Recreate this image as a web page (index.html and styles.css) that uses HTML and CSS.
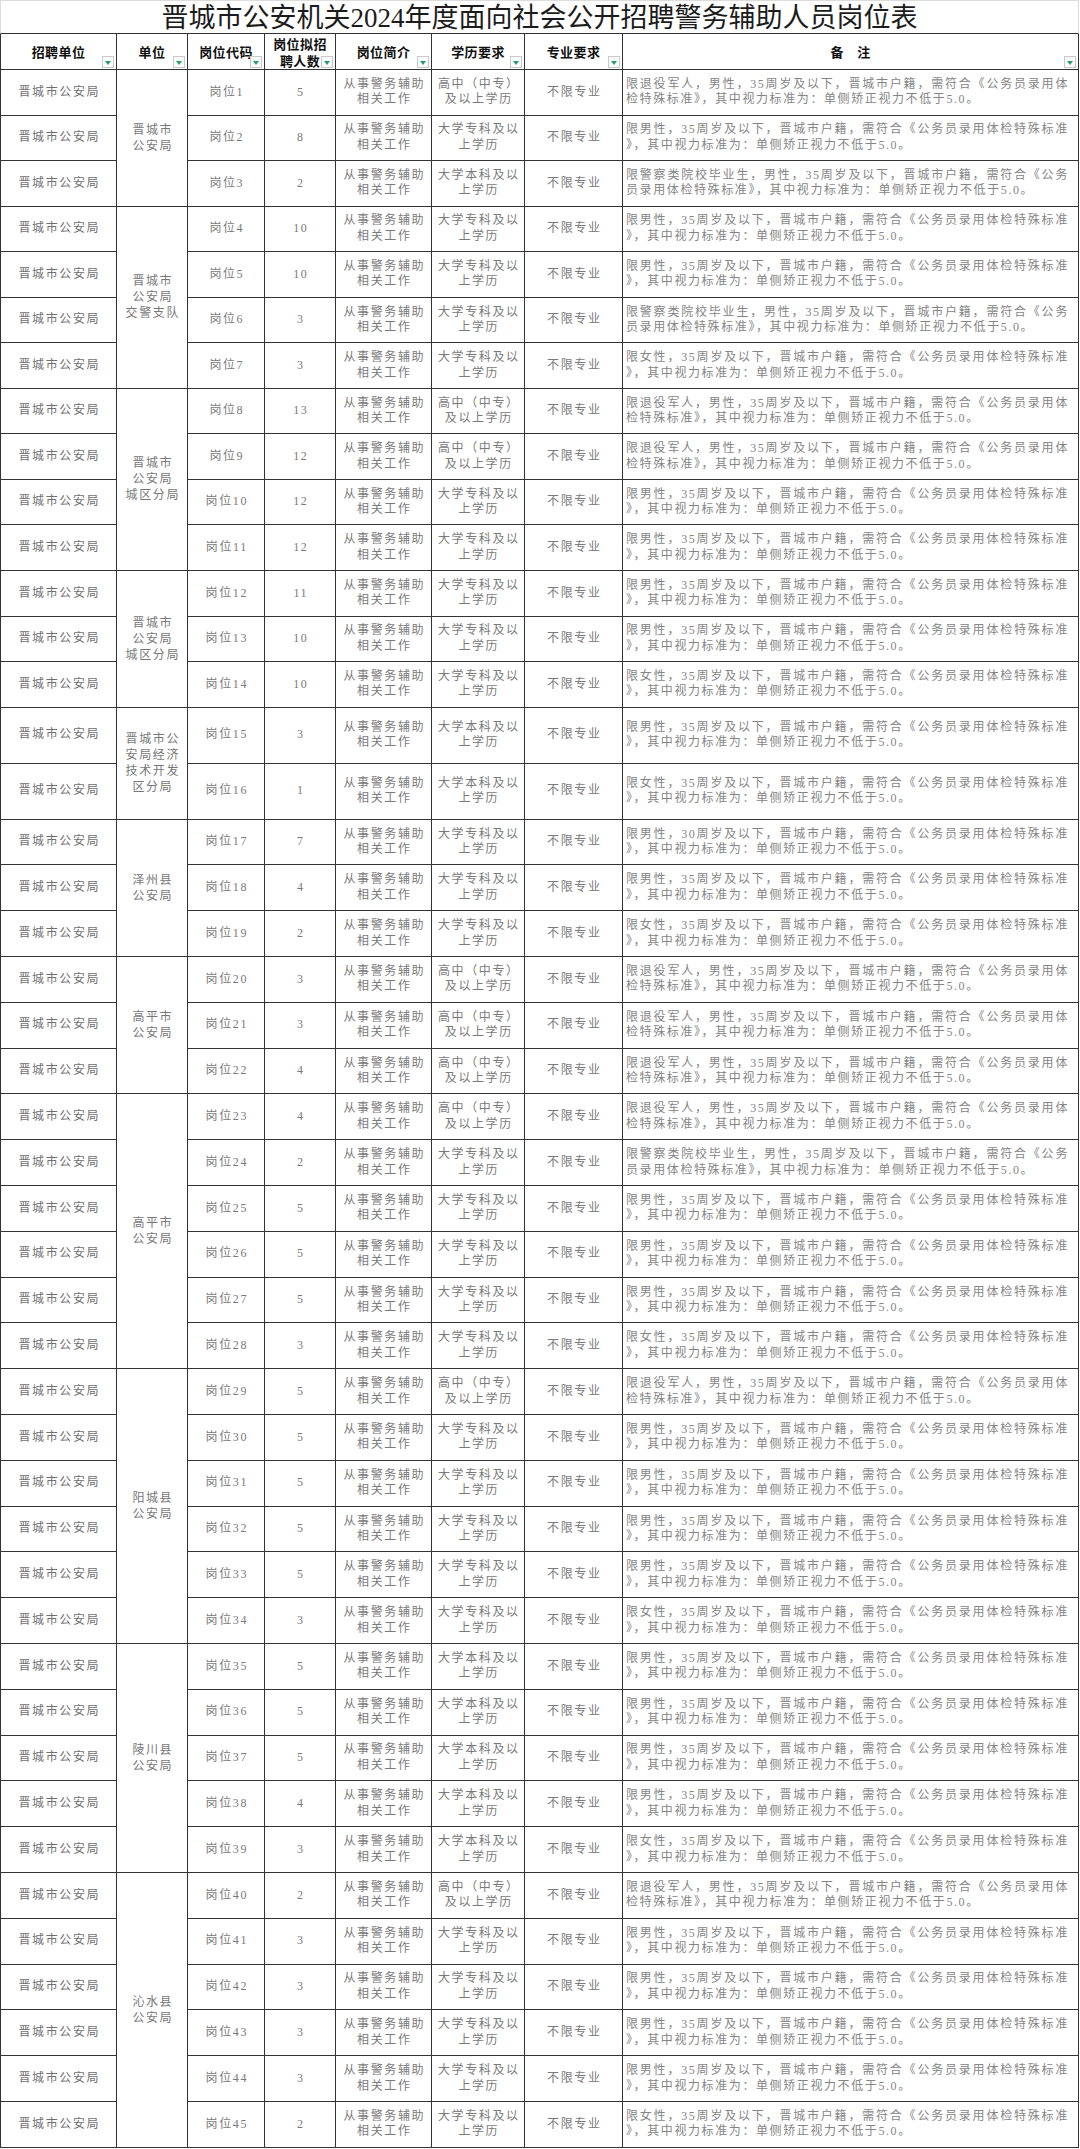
FILE: index.html
```html
<!DOCTYPE html>
<html lang="zh-CN">
<head>
<meta charset="utf-8">
<title>晋城市公安机关2024年度面向社会公开招聘警务辅助人员岗位表</title>
<link rel="stylesheet" href="styles.css">
</head>
<body>
<div class="sheet">
  <div class="title">晋城市公安机关2024年度面向社会公开招聘警务辅助人员岗位表</div>

  <div class="cell hd first">招聘单位<span class="flt"></span></div>
  <div class="cell hd">单位<span class="flt"></span></div>
  <div class="cell hd">岗位代码<span class="flt"></span></div>
  <div class="cell hd two">岗位拟招<br>聘人数<span class="flt"></span></div>
  <div class="cell hd">岗位简介<span class="flt"></span></div>
  <div class="cell hd">学历要求<span class="flt"></span></div>
  <div class="cell hd">专业要求<span class="flt"></span></div>
  <div class="cell hd wide">备　注<span class="flt"></span></div>

  <!-- 1 -->
  <div class="cell first org">晋城市公安局</div>
  <div class="cell unit span3">晋城市<br>公安局</div>
  <div class="cell">岗位1</div><div class="cell">5</div>
  <div class="cell">从事警务辅助<br>相关工作</div><div class="cell">高中（中专）<br>及以上学历</div>
  <div class="cell">不限专业</div>
  <div class="cell rm"><div class="rmw"><span class="l1">限退役军人，男性，35周岁及以下，晋城市户籍，需符合《公务员录用体</span><span class="l2">检特殊标准》，其中视力标准为：单侧矫正视力不低于5.0。</span></div></div>
  <!-- 2 -->
  <div class="cell first org">晋城市公安局</div>
  <div class="cell">岗位2</div><div class="cell">8</div>
  <div class="cell">从事警务辅助<br>相关工作</div><div class="cell">大学专科及以<br>上学历</div>
  <div class="cell">不限专业</div>
  <div class="cell rm"><div class="rmw"><span class="l1">限男性，35周岁及以下，晋城市户籍，需符合《公务员录用体检特殊标准</span><span class="l2">》，其中视力标准为：单侧矫正视力不低于5.0。</span></div></div>
  <!-- 3 -->
  <div class="cell first org">晋城市公安局</div>
  <div class="cell">岗位3</div><div class="cell">2</div>
  <div class="cell">从事警务辅助<br>相关工作</div><div class="cell">大学本科及以<br>上学历</div>
  <div class="cell">不限专业</div>
  <div class="cell rm"><div class="rmw"><span class="l1">限警察类院校毕业生，男性，35周岁及以下，晋城市户籍，需符合《公务</span><span class="l2">员录用体检特殊标准》，其中视力标准为：单侧矫正视力不低于5.0。</span></div></div>

  <!-- 4 -->
  <div class="cell first org">晋城市公安局</div>
  <div class="cell unit span4">晋城市<br>公安局<br>交警支队</div>
  <div class="cell">岗位4</div><div class="cell">10</div>
  <div class="cell">从事警务辅助<br>相关工作</div><div class="cell">大学专科及以<br>上学历</div>
  <div class="cell">不限专业</div>
  <div class="cell rm"><div class="rmw"><span class="l1">限男性，35周岁及以下，晋城市户籍，需符合《公务员录用体检特殊标准</span><span class="l2">》，其中视力标准为：单侧矫正视力不低于5.0。</span></div></div>
  <!-- 5 -->
  <div class="cell first org">晋城市公安局</div>
  <div class="cell">岗位5</div><div class="cell">10</div>
  <div class="cell">从事警务辅助<br>相关工作</div><div class="cell">大学专科及以<br>上学历</div>
  <div class="cell">不限专业</div>
  <div class="cell rm"><div class="rmw"><span class="l1">限男性，35周岁及以下，晋城市户籍，需符合《公务员录用体检特殊标准</span><span class="l2">》，其中视力标准为：单侧矫正视力不低于5.0。</span></div></div>
  <!-- 6 -->
  <div class="cell first org">晋城市公安局</div>
  <div class="cell">岗位6</div><div class="cell">3</div>
  <div class="cell">从事警务辅助<br>相关工作</div><div class="cell">大学专科及以<br>上学历</div>
  <div class="cell">不限专业</div>
  <div class="cell rm"><div class="rmw"><span class="l1">限警察类院校毕业生，男性，35周岁及以下，晋城市户籍，需符合《公务</span><span class="l2">员录用体检特殊标准》，其中视力标准为：单侧矫正视力不低于5.0。</span></div></div>
  <!-- 7 -->
  <div class="cell first org">晋城市公安局</div>
  <div class="cell">岗位7</div><div class="cell">3</div>
  <div class="cell">从事警务辅助<br>相关工作</div><div class="cell">大学专科及以<br>上学历</div>
  <div class="cell">不限专业</div>
  <div class="cell rm"><div class="rmw"><span class="l1">限女性，35周岁及以下，晋城市户籍，需符合《公务员录用体检特殊标准</span><span class="l2">》，其中视力标准为：单侧矫正视力不低于5.0。</span></div></div>

  <!-- 8 -->
  <div class="cell first org">晋城市公安局</div>
  <div class="cell unit span4">晋城市<br>公安局<br>城区分局</div>
  <div class="cell">岗位8</div><div class="cell">13</div>
  <div class="cell">从事警务辅助<br>相关工作</div><div class="cell">高中（中专）<br>及以上学历</div>
  <div class="cell">不限专业</div>
  <div class="cell rm"><div class="rmw"><span class="l1">限退役军人，男性，35周岁及以下，晋城市户籍，需符合《公务员录用体</span><span class="l2">检特殊标准》，其中视力标准为：单侧矫正视力不低于5.0。</span></div></div>
  <!-- 9 -->
  <div class="cell first org">晋城市公安局</div>
  <div class="cell">岗位9</div><div class="cell">12</div>
  <div class="cell">从事警务辅助<br>相关工作</div><div class="cell">高中（中专）<br>及以上学历</div>
  <div class="cell">不限专业</div>
  <div class="cell rm"><div class="rmw"><span class="l1">限退役军人，男性，35周岁及以下，晋城市户籍，需符合《公务员录用体</span><span class="l2">检特殊标准》，其中视力标准为：单侧矫正视力不低于5.0。</span></div></div>
  <!-- 10 -->
  <div class="cell first org">晋城市公安局</div>
  <div class="cell">岗位10</div><div class="cell">12</div>
  <div class="cell">从事警务辅助<br>相关工作</div><div class="cell">大学专科及以<br>上学历</div>
  <div class="cell">不限专业</div>
  <div class="cell rm"><div class="rmw"><span class="l1">限男性，35周岁及以下，晋城市户籍，需符合《公务员录用体检特殊标准</span><span class="l2">》，其中视力标准为：单侧矫正视力不低于5.0。</span></div></div>
  <!-- 11 -->
  <div class="cell first org">晋城市公安局</div>
  <div class="cell">岗位11</div><div class="cell">12</div>
  <div class="cell">从事警务辅助<br>相关工作</div><div class="cell">大学专科及以<br>上学历</div>
  <div class="cell">不限专业</div>
  <div class="cell rm"><div class="rmw"><span class="l1">限男性，35周岁及以下，晋城市户籍，需符合《公务员录用体检特殊标准</span><span class="l2">》，其中视力标准为：单侧矫正视力不低于5.0。</span></div></div>

  <!-- 12 -->
  <div class="cell first org">晋城市公安局</div>
  <div class="cell unit span3">晋城市<br>公安局<br>城区分局</div>
  <div class="cell">岗位12</div><div class="cell">11</div>
  <div class="cell">从事警务辅助<br>相关工作</div><div class="cell">大学专科及以<br>上学历</div>
  <div class="cell">不限专业</div>
  <div class="cell rm"><div class="rmw"><span class="l1">限男性，35周岁及以下，晋城市户籍，需符合《公务员录用体检特殊标准</span><span class="l2">》，其中视力标准为：单侧矫正视力不低于5.0。</span></div></div>
  <!-- 13 -->
  <div class="cell first org">晋城市公安局</div>
  <div class="cell">岗位13</div><div class="cell">10</div>
  <div class="cell">从事警务辅助<br>相关工作</div><div class="cell">大学专科及以<br>上学历</div>
  <div class="cell">不限专业</div>
  <div class="cell rm"><div class="rmw"><span class="l1">限男性，35周岁及以下，晋城市户籍，需符合《公务员录用体检特殊标准</span><span class="l2">》，其中视力标准为：单侧矫正视力不低于5.0。</span></div></div>
  <!-- 14 -->
  <div class="cell first org">晋城市公安局</div>
  <div class="cell">岗位14</div><div class="cell">10</div>
  <div class="cell">从事警务辅助<br>相关工作</div><div class="cell">大学专科及以<br>上学历</div>
  <div class="cell">不限专业</div>
  <div class="cell rm"><div class="rmw"><span class="l1">限女性，35周岁及以下，晋城市户籍，需符合《公务员录用体检特殊标准</span><span class="l2">》，其中视力标准为：单侧矫正视力不低于5.0。</span></div></div>

  <!-- 15 -->
  <div class="cell first org">晋城市公安局</div>
  <div class="cell unit span2">晋城市公<br>安局经济<br>技术开发<br>区分局</div>
  <div class="cell">岗位15</div><div class="cell">3</div>
  <div class="cell">从事警务辅助<br>相关工作</div><div class="cell">大学本科及以<br>上学历</div>
  <div class="cell">不限专业</div>
  <div class="cell rm"><div class="rmw"><span class="l1">限男性，35周岁及以下，晋城市户籍，需符合《公务员录用体检特殊标准</span><span class="l2">》，其中视力标准为：单侧矫正视力不低于5.0。</span></div></div>
  <!-- 16 -->
  <div class="cell first org">晋城市公安局</div>
  <div class="cell">岗位16</div><div class="cell">1</div>
  <div class="cell">从事警务辅助<br>相关工作</div><div class="cell">大学本科及以<br>上学历</div>
  <div class="cell">不限专业</div>
  <div class="cell rm"><div class="rmw"><span class="l1">限女性，35周岁及以下，晋城市户籍，需符合《公务员录用体检特殊标准</span><span class="l2">》，其中视力标准为：单侧矫正视力不低于5.0。</span></div></div>

  <!-- 17 -->
  <div class="cell first org">晋城市公安局</div>
  <div class="cell unit span3">泽州县<br>公安局</div>
  <div class="cell">岗位17</div><div class="cell">7</div>
  <div class="cell">从事警务辅助<br>相关工作</div><div class="cell">大学专科及以<br>上学历</div>
  <div class="cell">不限专业</div>
  <div class="cell rm"><div class="rmw"><span class="l1">限男性，30周岁及以下，晋城市户籍，需符合《公务员录用体检特殊标准</span><span class="l2">》，其中视力标准为：单侧矫正视力不低于5.0。</span></div></div>
  <!-- 18 -->
  <div class="cell first org">晋城市公安局</div>
  <div class="cell">岗位18</div><div class="cell">4</div>
  <div class="cell">从事警务辅助<br>相关工作</div><div class="cell">大学专科及以<br>上学历</div>
  <div class="cell">不限专业</div>
  <div class="cell rm"><div class="rmw"><span class="l1">限男性，35周岁及以下，晋城市户籍，需符合《公务员录用体检特殊标准</span><span class="l2">》，其中视力标准为：单侧矫正视力不低于5.0。</span></div></div>
  <!-- 19 -->
  <div class="cell first org">晋城市公安局</div>
  <div class="cell">岗位19</div><div class="cell">2</div>
  <div class="cell">从事警务辅助<br>相关工作</div><div class="cell">大学专科及以<br>上学历</div>
  <div class="cell">不限专业</div>
  <div class="cell rm"><div class="rmw"><span class="l1">限女性，35周岁及以下，晋城市户籍，需符合《公务员录用体检特殊标准</span><span class="l2">》，其中视力标准为：单侧矫正视力不低于5.0。</span></div></div>

  <!-- 20 -->
  <div class="cell first org">晋城市公安局</div>
  <div class="cell unit span3">高平市<br>公安局</div>
  <div class="cell">岗位20</div><div class="cell">3</div>
  <div class="cell">从事警务辅助<br>相关工作</div><div class="cell">高中（中专）<br>及以上学历</div>
  <div class="cell">不限专业</div>
  <div class="cell rm"><div class="rmw"><span class="l1">限退役军人，男性，35周岁及以下，晋城市户籍，需符合《公务员录用体</span><span class="l2">检特殊标准》，其中视力标准为：单侧矫正视力不低于5.0。</span></div></div>
  <!-- 21 -->
  <div class="cell first org">晋城市公安局</div>
  <div class="cell">岗位21</div><div class="cell">3</div>
  <div class="cell">从事警务辅助<br>相关工作</div><div class="cell">高中（中专）<br>及以上学历</div>
  <div class="cell">不限专业</div>
  <div class="cell rm"><div class="rmw"><span class="l1">限退役军人，男性，35周岁及以下，晋城市户籍，需符合《公务员录用体</span><span class="l2">检特殊标准》，其中视力标准为：单侧矫正视力不低于5.0。</span></div></div>
  <!-- 22 -->
  <div class="cell first org">晋城市公安局</div>
  <div class="cell">岗位22</div><div class="cell">4</div>
  <div class="cell">从事警务辅助<br>相关工作</div><div class="cell">高中（中专）<br>及以上学历</div>
  <div class="cell">不限专业</div>
  <div class="cell rm"><div class="rmw"><span class="l1">限退役军人，男性，35周岁及以下，晋城市户籍，需符合《公务员录用体</span><span class="l2">检特殊标准》，其中视力标准为：单侧矫正视力不低于5.0。</span></div></div>

  <!-- 23 -->
  <div class="cell first org">晋城市公安局</div>
  <div class="cell unit span6">高平市<br>公安局</div>
  <div class="cell">岗位23</div><div class="cell">4</div>
  <div class="cell">从事警务辅助<br>相关工作</div><div class="cell">高中（中专）<br>及以上学历</div>
  <div class="cell">不限专业</div>
  <div class="cell rm"><div class="rmw"><span class="l1">限退役军人，男性，35周岁及以下，晋城市户籍，需符合《公务员录用体</span><span class="l2">检特殊标准》，其中视力标准为：单侧矫正视力不低于5.0。</span></div></div>
  <!-- 24 -->
  <div class="cell first org">晋城市公安局</div>
  <div class="cell">岗位24</div><div class="cell">2</div>
  <div class="cell">从事警务辅助<br>相关工作</div><div class="cell">大学专科及以<br>上学历</div>
  <div class="cell">不限专业</div>
  <div class="cell rm"><div class="rmw"><span class="l1">限警察类院校毕业生，男性，35周岁及以下，晋城市户籍，需符合《公务</span><span class="l2">员录用体检特殊标准》，其中视力标准为：单侧矫正视力不低于5.0。</span></div></div>
  <!-- 25 -->
  <div class="cell first org">晋城市公安局</div>
  <div class="cell">岗位25</div><div class="cell">5</div>
  <div class="cell">从事警务辅助<br>相关工作</div><div class="cell">大学专科及以<br>上学历</div>
  <div class="cell">不限专业</div>
  <div class="cell rm"><div class="rmw"><span class="l1">限男性，35周岁及以下，晋城市户籍，需符合《公务员录用体检特殊标准</span><span class="l2">》，其中视力标准为：单侧矫正视力不低于5.0。</span></div></div>
  <!-- 26 -->
  <div class="cell first org">晋城市公安局</div>
  <div class="cell">岗位26</div><div class="cell">5</div>
  <div class="cell">从事警务辅助<br>相关工作</div><div class="cell">大学专科及以<br>上学历</div>
  <div class="cell">不限专业</div>
  <div class="cell rm"><div class="rmw"><span class="l1">限男性，35周岁及以下，晋城市户籍，需符合《公务员录用体检特殊标准</span><span class="l2">》，其中视力标准为：单侧矫正视力不低于5.0。</span></div></div>
  <!-- 27 -->
  <div class="cell first org">晋城市公安局</div>
  <div class="cell">岗位27</div><div class="cell">5</div>
  <div class="cell">从事警务辅助<br>相关工作</div><div class="cell">大学专科及以<br>上学历</div>
  <div class="cell">不限专业</div>
  <div class="cell rm"><div class="rmw"><span class="l1">限男性，35周岁及以下，晋城市户籍，需符合《公务员录用体检特殊标准</span><span class="l2">》，其中视力标准为：单侧矫正视力不低于5.0。</span></div></div>
  <!-- 28 -->
  <div class="cell first org">晋城市公安局</div>
  <div class="cell">岗位28</div><div class="cell">3</div>
  <div class="cell">从事警务辅助<br>相关工作</div><div class="cell">大学专科及以<br>上学历</div>
  <div class="cell">不限专业</div>
  <div class="cell rm"><div class="rmw"><span class="l1">限女性，35周岁及以下，晋城市户籍，需符合《公务员录用体检特殊标准</span><span class="l2">》，其中视力标准为：单侧矫正视力不低于5.0。</span></div></div>

  <!-- 29 -->
  <div class="cell first org">晋城市公安局</div>
  <div class="cell unit span6">阳城县<br>公安局</div>
  <div class="cell">岗位29</div><div class="cell">5</div>
  <div class="cell">从事警务辅助<br>相关工作</div><div class="cell">高中（中专）<br>及以上学历</div>
  <div class="cell">不限专业</div>
  <div class="cell rm"><div class="rmw"><span class="l1">限退役军人，男性，35周岁及以下，晋城市户籍，需符合《公务员录用体</span><span class="l2">检特殊标准》，其中视力标准为：单侧矫正视力不低于5.0。</span></div></div>
  <!-- 30 -->
  <div class="cell first org">晋城市公安局</div>
  <div class="cell">岗位30</div><div class="cell">5</div>
  <div class="cell">从事警务辅助<br>相关工作</div><div class="cell">大学专科及以<br>上学历</div>
  <div class="cell">不限专业</div>
  <div class="cell rm"><div class="rmw"><span class="l1">限男性，35周岁及以下，晋城市户籍，需符合《公务员录用体检特殊标准</span><span class="l2">》，其中视力标准为：单侧矫正视力不低于5.0。</span></div></div>
  <!-- 31 -->
  <div class="cell first org">晋城市公安局</div>
  <div class="cell">岗位31</div><div class="cell">5</div>
  <div class="cell">从事警务辅助<br>相关工作</div><div class="cell">大学专科及以<br>上学历</div>
  <div class="cell">不限专业</div>
  <div class="cell rm"><div class="rmw"><span class="l1">限男性，35周岁及以下，晋城市户籍，需符合《公务员录用体检特殊标准</span><span class="l2">》，其中视力标准为：单侧矫正视力不低于5.0。</span></div></div>
  <!-- 32 -->
  <div class="cell first org">晋城市公安局</div>
  <div class="cell">岗位32</div><div class="cell">5</div>
  <div class="cell">从事警务辅助<br>相关工作</div><div class="cell">大学专科及以<br>上学历</div>
  <div class="cell">不限专业</div>
  <div class="cell rm"><div class="rmw"><span class="l1">限男性，35周岁及以下，晋城市户籍，需符合《公务员录用体检特殊标准</span><span class="l2">》，其中视力标准为：单侧矫正视力不低于5.0。</span></div></div>
  <!-- 33 -->
  <div class="cell first org">晋城市公安局</div>
  <div class="cell">岗位33</div><div class="cell">5</div>
  <div class="cell">从事警务辅助<br>相关工作</div><div class="cell">大学专科及以<br>上学历</div>
  <div class="cell">不限专业</div>
  <div class="cell rm"><div class="rmw"><span class="l1">限男性，35周岁及以下，晋城市户籍，需符合《公务员录用体检特殊标准</span><span class="l2">》，其中视力标准为：单侧矫正视力不低于5.0。</span></div></div>
  <!-- 34 -->
  <div class="cell first org">晋城市公安局</div>
  <div class="cell">岗位34</div><div class="cell">3</div>
  <div class="cell">从事警务辅助<br>相关工作</div><div class="cell">大学专科及以<br>上学历</div>
  <div class="cell">不限专业</div>
  <div class="cell rm"><div class="rmw"><span class="l1">限女性，35周岁及以下，晋城市户籍，需符合《公务员录用体检特殊标准</span><span class="l2">》，其中视力标准为：单侧矫正视力不低于5.0。</span></div></div>

  <!-- 35 -->
  <div class="cell first org">晋城市公安局</div>
  <div class="cell unit span5">陵川县<br>公安局</div>
  <div class="cell">岗位35</div><div class="cell">5</div>
  <div class="cell">从事警务辅助<br>相关工作</div><div class="cell">大学本科及以<br>上学历</div>
  <div class="cell">不限专业</div>
  <div class="cell rm"><div class="rmw"><span class="l1">限男性，35周岁及以下，晋城市户籍，需符合《公务员录用体检特殊标准</span><span class="l2">》，其中视力标准为：单侧矫正视力不低于5.0。</span></div></div>
  <!-- 36 -->
  <div class="cell first org">晋城市公安局</div>
  <div class="cell">岗位36</div><div class="cell">5</div>
  <div class="cell">从事警务辅助<br>相关工作</div><div class="cell">大学本科及以<br>上学历</div>
  <div class="cell">不限专业</div>
  <div class="cell rm"><div class="rmw"><span class="l1">限男性，35周岁及以下，晋城市户籍，需符合《公务员录用体检特殊标准</span><span class="l2">》，其中视力标准为：单侧矫正视力不低于5.0。</span></div></div>
  <!-- 37 -->
  <div class="cell first org">晋城市公安局</div>
  <div class="cell">岗位37</div><div class="cell">5</div>
  <div class="cell">从事警务辅助<br>相关工作</div><div class="cell">大学本科及以<br>上学历</div>
  <div class="cell">不限专业</div>
  <div class="cell rm"><div class="rmw"><span class="l1">限男性，35周岁及以下，晋城市户籍，需符合《公务员录用体检特殊标准</span><span class="l2">》，其中视力标准为：单侧矫正视力不低于5.0。</span></div></div>
  <!-- 38 -->
  <div class="cell first org">晋城市公安局</div>
  <div class="cell">岗位38</div><div class="cell">4</div>
  <div class="cell">从事警务辅助<br>相关工作</div><div class="cell">大学本科及以<br>上学历</div>
  <div class="cell">不限专业</div>
  <div class="cell rm"><div class="rmw"><span class="l1">限男性，35周岁及以下，晋城市户籍，需符合《公务员录用体检特殊标准</span><span class="l2">》，其中视力标准为：单侧矫正视力不低于5.0。</span></div></div>
  <!-- 39 -->
  <div class="cell first org">晋城市公安局</div>
  <div class="cell">岗位39</div><div class="cell">3</div>
  <div class="cell">从事警务辅助<br>相关工作</div><div class="cell">大学本科及以<br>上学历</div>
  <div class="cell">不限专业</div>
  <div class="cell rm"><div class="rmw"><span class="l1">限女性，35周岁及以下，晋城市户籍，需符合《公务员录用体检特殊标准</span><span class="l2">》，其中视力标准为：单侧矫正视力不低于5.0。</span></div></div>

  <!-- 40 -->
  <div class="cell first org">晋城市公安局</div>
  <div class="cell unit span6">沁水县<br>公安局</div>
  <div class="cell">岗位40</div><div class="cell">2</div>
  <div class="cell">从事警务辅助<br>相关工作</div><div class="cell">高中（中专）<br>及以上学历</div>
  <div class="cell">不限专业</div>
  <div class="cell rm"><div class="rmw"><span class="l1">限退役军人，男性，35周岁及以下，晋城市户籍，需符合《公务员录用体</span><span class="l2">检特殊标准》，其中视力标准为：单侧矫正视力不低于5.0。</span></div></div>
  <!-- 41 -->
  <div class="cell first org">晋城市公安局</div>
  <div class="cell">岗位41</div><div class="cell">3</div>
  <div class="cell">从事警务辅助<br>相关工作</div><div class="cell">大学专科及以<br>上学历</div>
  <div class="cell">不限专业</div>
  <div class="cell rm"><div class="rmw"><span class="l1">限男性，35周岁及以下，晋城市户籍，需符合《公务员录用体检特殊标准</span><span class="l2">》，其中视力标准为：单侧矫正视力不低于5.0。</span></div></div>
  <!-- 42 -->
  <div class="cell first org">晋城市公安局</div>
  <div class="cell">岗位42</div><div class="cell">3</div>
  <div class="cell">从事警务辅助<br>相关工作</div><div class="cell">大学专科及以<br>上学历</div>
  <div class="cell">不限专业</div>
  <div class="cell rm"><div class="rmw"><span class="l1">限男性，35周岁及以下，晋城市户籍，需符合《公务员录用体检特殊标准</span><span class="l2">》，其中视力标准为：单侧矫正视力不低于5.0。</span></div></div>
  <!-- 43 -->
  <div class="cell first org">晋城市公安局</div>
  <div class="cell">岗位43</div><div class="cell">3</div>
  <div class="cell">从事警务辅助<br>相关工作</div><div class="cell">大学专科及以<br>上学历</div>
  <div class="cell">不限专业</div>
  <div class="cell rm"><div class="rmw"><span class="l1">限男性，35周岁及以下，晋城市户籍，需符合《公务员录用体检特殊标准</span><span class="l2">》，其中视力标准为：单侧矫正视力不低于5.0。</span></div></div>
  <!-- 44 -->
  <div class="cell first org">晋城市公安局</div>
  <div class="cell">岗位44</div><div class="cell">3</div>
  <div class="cell">从事警务辅助<br>相关工作</div><div class="cell">大学专科及以<br>上学历</div>
  <div class="cell">不限专业</div>
  <div class="cell rm"><div class="rmw"><span class="l1">限男性，35周岁及以下，晋城市户籍，需符合《公务员录用体检特殊标准</span><span class="l2">》，其中视力标准为：单侧矫正视力不低于5.0。</span></div></div>
  <!-- 45 -->
  <div class="cell first org">晋城市公安局</div>
  <div class="cell">岗位45</div><div class="cell">2</div>
  <div class="cell">从事警务辅助<br>相关工作</div><div class="cell">大学专科及以<br>上学历</div>
  <div class="cell">不限专业</div>
  <div class="cell rm"><div class="rmw"><span class="l1">限女性，35周岁及以下，晋城市户籍，需符合《公务员录用体检特殊标准</span><span class="l2">》，其中视力标准为：单侧矫正视力不低于5.0。</span></div></div>
</div>
</body>
</html>
```

FILE: styles.css
```css
html, body {
  margin: 0;
  padding: 0;
  background: #ffffff;
}

.sheet {
  display: grid;
  width: 1079px;
  grid-template-columns: 117px 71px 77px 71px 96px 93px 98px 456px;
  grid-template-rows: 34px 36px repeat(14, 45.55px) 56px 56px repeat(29, 45.8px);
  font-family: "Liberation Serif", "Noto Sans CJK SC", serif;
}

.title {
  grid-column: 1 / -1;
  box-sizing: border-box;
  border: 1px solid #dcdcdc;
  border-bottom: 1px solid #333333;
  display: flex;
  align-items: flex-end;
  justify-content: center;
  font-size: 27px;
  line-height: 27px;
  color: #1c1c1c;
  padding-bottom: 1px;
}

.cell {
  box-sizing: border-box;
  border-right: 1px solid #333333;
  border-bottom: 1px solid #333333;
  display: flex;
  align-items: center;
  justify-content: center;
  text-align: center;
  font-size: 12px;
  letter-spacing: 1.6px;
  line-height: 15.5px;
  color: #7a7a7a;
  padding-left: 1.6px;
  min-width: 0;
  white-space: nowrap;
}

.first {
  border-left: 1px solid #333333;
}

.org {
  color: #707070;
}

.hd {
  position: relative;
  font-family: "Noto Sans CJK SC", sans-serif;
  font-weight: 700;
  font-size: 13px;
  letter-spacing: 0.4px;
  line-height: 17px;
  color: #111111;
  padding-left: 0;
}

.hd.two {
  line-height: 17px;
}

.flt {
  position: absolute;
  right: 2px;
  bottom: 1px;
  width: 12px;
  height: 12px;
  box-sizing: border-box;
  border: 1px solid #c9c9c9;
  background: #fbfbfb;
}

.flt::after {
  content: "";
  position: absolute;
  left: 2px;
  top: 4px;
  border-left: 3px solid transparent;
  border-right: 3px solid transparent;
  border-top: 4px solid #21a06d;
}

.unit {
  line-height: 16px;
  color: #777777;
}

.span2 { grid-row: span 2; }
.span3 { grid-row: span 3; }
.span4 { grid-row: span 4; }
.span5 { grid-row: span 5; }
.span6 { grid-row: span 6; }

.rm {
  justify-content: flex-start;
  text-align: left;
  padding: 0 9px 0 3px;
  color: #858585;
  white-space: normal;
}

.rmw {
  width: 100%;
}

.l1 {
  display: block;
  text-align: justify;
  text-align-last: justify;
  white-space: nowrap;
}

.l2 {
  display: block;
  white-space: nowrap;
}
```
